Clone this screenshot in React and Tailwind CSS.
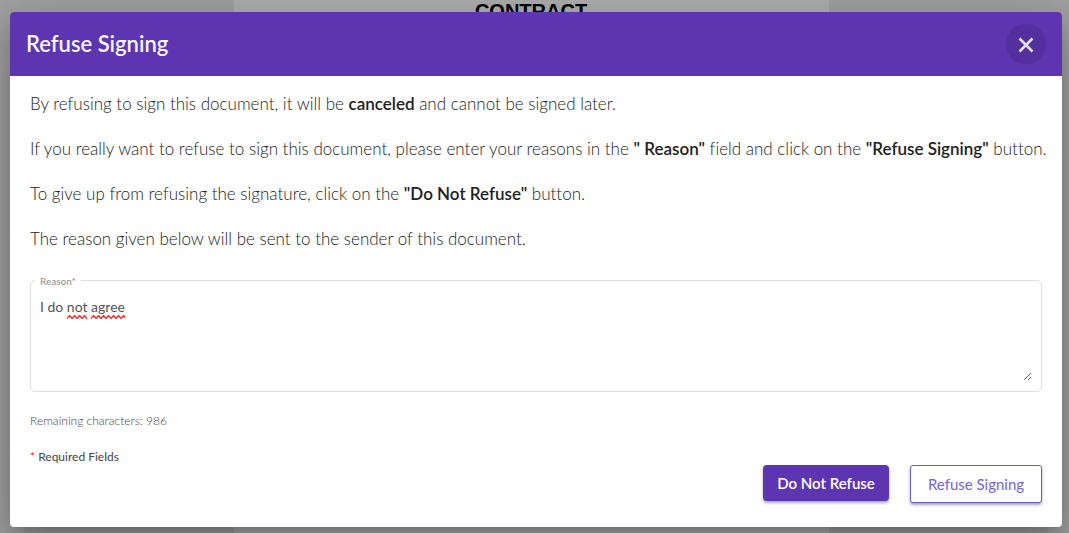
import { useState } from "react";

const MAX_LENGTH = 1000;

function Squiggle({ className }) {
  return (
    <svg className={className} height="4" aria-hidden="true">
      <defs>
        <pattern id="wave" width="5" height="4" patternUnits="userSpaceOnUse">
          <path d="M-1.5 2 L0 3.5 L2.5 0.5 L5 3.5 L6.5 2" fill="none" stroke="#ff2020" strokeWidth="1.3" />
        </pattern>
      </defs>
      <rect width="100%" height="4" fill="url(#wave)" />
    </svg>
  );
}

function ReasonField({ value, onChange }) {
  return (
    <div className="relative mt-[29px] rounded-[5px] border border-[#dedede] px-[9px] pt-4 pb-2.5">
      <label htmlFor="reason" className="absolute -top-2 left-1 bg-white px-[5px] text-[10px] leading-4 text-[#8c8c8c]">
        Reason*
      </label>
      <textarea
        id="reason"
        value={value}
        maxLength={MAX_LENGTH}
        spellCheck={false}
        onChange={(e) => onChange(e.target.value)}
        className="block h-[84px] w-full resize-y bg-transparent text-sm leading-5 text-[#555] outline-none"
      />
      <Squiggle className="pointer-events-none absolute top-[34px] left-[36px] w-5" />
      <Squiggle className="pointer-events-none absolute top-[34px] left-[60px] w-[34px]" />
    </div>
  );
}

export default function App() {
  const [reason, setReason] = useState("I do not agree");

  return (
    <div className="grid min-h-screen bg-[#a0a0a0] pr-[7px] font-['Lato','Open_Sans',sans-serif] [font-variant-ligatures:none]">
      <div className="col-start-1 row-start-1 mx-auto w-full max-w-[595px] bg-[#adadad] text-center font-['Liberation_Sans',sans-serif] text-xl leading-[22px] font-bold text-black">
        CONTRACT
      </div>

      <section
        role="dialog"
        aria-modal="true"
        aria-labelledby="dialog-title"
        className="relative col-start-1 row-start-1 mt-3 mb-1.5 ml-2.5 flex flex-col overflow-hidden rounded bg-white shadow-[0_11px_15px_-7px_rgba(0,0,0,0.2),0_24px_38px_3px_rgba(0,0,0,0.14),0_9px_46px_8px_rgba(0,0,0,0.12)]"
      >
        <header className="flex h-16 items-center justify-between bg-[#5e35b1] px-4">
          <h1 id="dialog-title" className="text-[22px] leading-8 font-semibold text-[#f7f4fc]">Refuse Signing</h1>
          <button type="button" aria-label="Close" className="flex size-10 items-center justify-center rounded-full bg-[#542f9e]">
            <svg viewBox="0 0 24 24" className="size-6" fill="none" stroke="#e4e0ec" strokeWidth="2.6">
              <path d="M5.5 6.5 L18.5 19.5 M18.5 6.5 L5.5 19.5" />
            </svg>
          </button>
        </header>

        <div className="flex grow flex-col px-5 pt-4 pb-6">
          <div className="flex flex-col gap-[21px] text-[17px] leading-6 font-light text-[#212121] lg:whitespace-nowrap">
            <p>
              By refusing to sign this document, it will be <strong className="font-semibold">canceled</strong> and cannot be signed later.
            </p>
            <p>
              If you really want to refuse to sign this document, please enter your reasons in the{" "}
              <strong className="font-semibold">" Reason"</strong> field and click on the{" "}
              <strong className="font-semibold">"Refuse Signing"</strong> button.
            </p>
            <p>
              To give up from refusing the signature, click on the <strong className="font-semibold">"Do Not Refuse"</strong> button.
            </p>
            <p>The reason given below will be sent to the sender of this document.</p>
          </div>

          <ReasonField value={reason} onChange={setReason} />

          <p className="mt-[21px] text-xs leading-4 font-light text-[#424242]">
            Remaining characters: {MAX_LENGTH - reason.length}
          </p>
          <p className="mt-5 text-xs leading-4 text-[#424242]">
            <span className="text-[#ff2020]">*</span> Required Fields
          </p>

          <div className="flex items-start justify-end gap-[21px]">
            <button
              type="button"
              className="h-9 w-[126px] rounded bg-[#5e35b1] text-[15px] font-semibold text-white shadow-[0_2px_3px_rgba(0,0,0,0.35)]"
            >
              Do Not Refuse
            </button>
            <button
              type="button"
              className="h-[38px] w-[132px] rounded-[3px] border border-[#6f5bd0] bg-white text-[15px] text-[#7564d4] shadow-[0_2px_3px_rgba(0,0,0,0.35)]"
            >
              Refuse Signing
            </button>
          </div>
        </div>
      </section>
    </div>
  );
}
